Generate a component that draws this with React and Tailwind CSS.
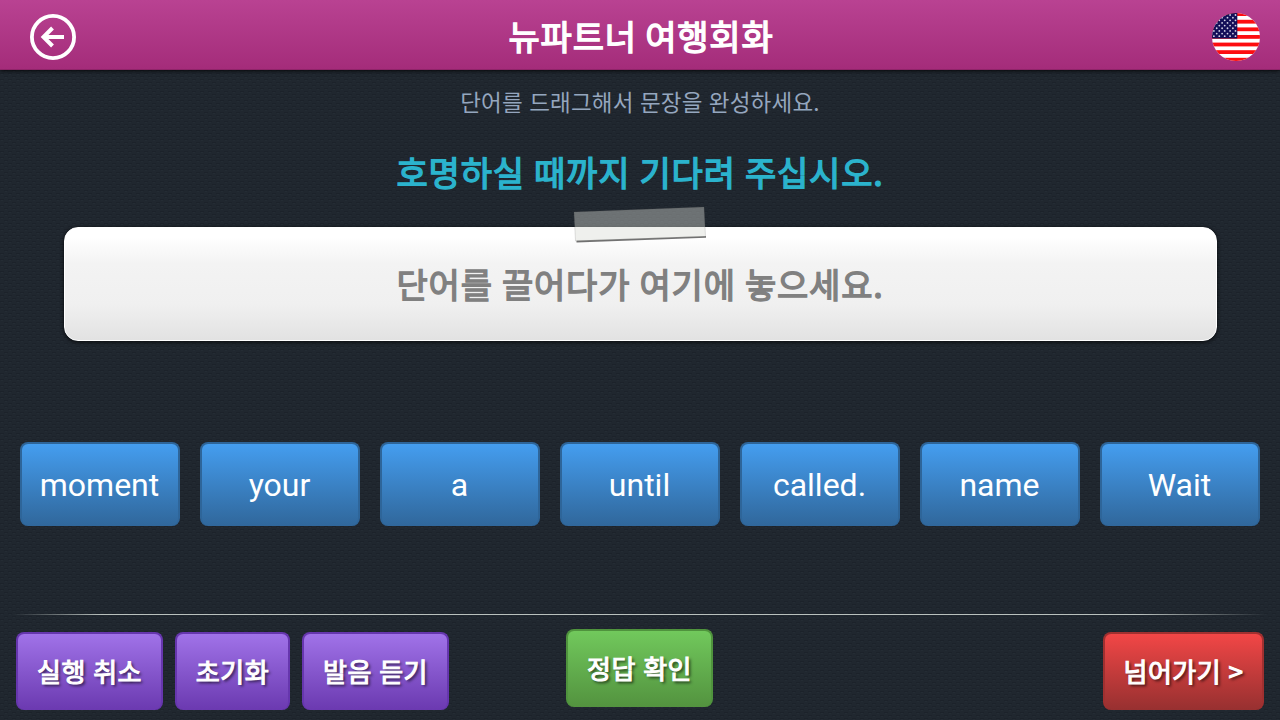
import React from 'react';

const words = ['moment', 'your', 'a', 'until', 'called.', 'name', 'Wait'];

const BackIcon = () => (
  <svg className="h-[46px] w-[46px]" viewBox="0 0 46 46" fill="none" stroke="white">
    <circle cx="23" cy="23" r="21.1" strokeWidth="3.8" />
    <path d="M34 23H14M22.500 14l-9 9 9 9" strokeWidth="4" />
  </svg>
);

const stripes = [0, 1, 2, 3, 4, 5, 6];
const starRows = [0, 1, 2, 3, 4, 5, 6, 7, 8];

const FlagIcon = () => (
  <svg className="h-12 w-12" viewBox="0 0 48 48">
    <defs>
      <clipPath id="round">
        <circle cx="24" cy="24" r="24" />
      </clipPath>
    </defs>
    <g clipPath="url(#round)">
      <rect width="48" height="48" fill="#fff" />
      {stripes.map((i) => (
        <rect key={i} y={i * 7.6 - 0.8} width="48" height="3.8" fill="#fd0d10" />
      ))}
      <rect width="25.3" height="25.5" fill="#140f58" />
      {starRows.map((row) =>
        [0, 1, 2, 3, 4].map((col) => (
          <circle
            key={`${row}-${col}`}
            cx={(row % 2 ? 4.7 : 1.9) + col * 5.4}
            cy={2 + row * 2.65}
            r={col === 4 && row % 2 ? 0 : 0.9}
            fill="#d5d3e6"
          />
        ))
      )}
    </g>
  </svg>
);

const Tape = () => (
  <svg className="absolute left-[508px] top-[-23px] h-[42px] w-[138px]" viewBox="0 0 138 42">
    <path d="M3.500 36.500L133 31.800" stroke="#000" strokeOpacity="0.55" strokeWidth="1.8" />
    <path d="M1 7L131 2L132.500 31.500L2.500 36Z" fill="#d8dcd4" fillOpacity="0.42" stroke="#555" strokeOpacity="0.25" strokeWidth="0.7" />
  </svg>
);

const ActionButton = ({ className, children }) => (
  <button
    className={`h-[78px] whitespace-nowrap rounded-lg border-2 border-b-0 pb-1 text-[26px] tracking-[0.5px] text-white [-webkit-text-stroke:1.1px_white] [text-shadow:2px_2px_3px_rgba(0,0,0,0.75)] [word-spacing:1px] ${className}`}
  >
    {children}
  </button>
);

const purple = 'border-[#6636ae] from-[#a274ea] to-[#6b39b0] bg-linear-to-b bg-origin-border';

const App = () => {
  return (
    <div className="relative flex h-[720px] w-[1280px] flex-col overflow-hidden bg-[#20272f] font-['Noto_Sans_CJK_KR',sans-serif]">
      <svg className="absolute inset-0 h-full w-full">
        <defs>
          <pattern id="weave" width="8" height="6" patternUnits="userSpaceOnUse">
            <path d="M0 1.500h4M4 4.500h4" stroke="#1c222a" strokeWidth="1" />
            <path d="M1 2.500h2M5 5.500h2" stroke="#242c34" strokeWidth="1" />
          </pattern>
        </defs>
        <rect width="1280" height="720" fill="url(#weave)" />
      </svg>

      <header className="relative flex h-[70px] shrink-0 items-center justify-between border-b border-[#8f2469] bg-linear-to-b from-[#b94292] to-[#a42c7a] pl-[30px] pr-5 pt-1 shadow-[0_1px_4px_rgba(0,0,0,0.8)]">
        <BackIcon />
        <h1 className="-ml-1.5 -mt-0.5 text-[34px] leading-none tracking-[0.8px] text-white [-webkit-text-stroke:1.4px_white]">뉴파트너 여행회화</h1>
        <FlagIcon />
      </header>

      <main className="relative flex flex-1 flex-col">
        <p className="mt-[15px] text-center text-[22.5px] leading-8 tracking-[0.2px] text-[#95a6be] [word-spacing:1px]">단어를 드래그해서 문장을 완성하세요.</p>
        <h2 className="mt-[31px] text-center text-[34px] leading-12 tracking-[0.8px] text-[#2bb3cd] [-webkit-text-stroke:1.4px_#2bb3cd] [word-spacing:0.8px]">호명하실 때까지 기다려 주십시오.</h2>

        <div className="relative mx-[63.5px] mt-[31px] flex h-[114px] items-center justify-center rounded-[14px] border border-white bg-[linear-gradient(to_bottom,#fff_8%,#f3f3f3_32%,#f0f0f0_68%,#e2e2e2_100%)] pb-0.5 shadow-[0_1px_4px_rgba(0,0,0,0.8)]">
          <Tape />
          <span className="text-[34px] tracking-[0.8px] text-[#808080] [-webkit-text-stroke:1.4px_#808080] [word-spacing:0.8px]">단어를 끌어다가 여기에 놓으세요.</span>
        </div>

        <div className="mx-5 mt-[101px] flex gap-5 font-['Roboto',sans-serif]">
          {words.map((word) => (
            <button
              key={word}
              className="h-21 flex-1 rounded-lg border-2 border-b-0 border-[#2e6599] bg-linear-to-b from-[#459ff2] to-[#30679b] bg-origin-border pr-px text-[32px] text-white"
            >
              {word}
            </button>
          ))}
        </div>
      </main>

      <footer className="relative h-[106px] shrink-0">
        <div className="h-px bg-[linear-gradient(to_right,transparent_1%,#b9c0bd_8%,#b9c0bd_89%,transparent_99%)]" />
        <div className="flex items-start px-4 pt-[17px]">
          <div className="flex gap-3">
            <ActionButton className={`w-[147px] ${purple}`}>실행 취소</ActionButton>
            <ActionButton className={`w-[115px] ${purple}`}>초기화</ActionButton>
            <ActionButton className={`w-[147px] ${purple}`}>발음 듣기</ActionButton>
          </div>
          <ActionButton className="-mt-[3px] ml-[117px] w-[147px] border-[#4f933d] bg-linear-to-b from-[#72ca5d] to-[#53933f] bg-origin-border">
            정답 확인
          </ActionButton>
          <ActionButton className="ml-auto w-[161px] border-[#a03030] bg-linear-to-b from-[#f54747] to-[#973030] bg-origin-border">
            넘어가기 &gt;
          </ActionButton>
        </div>
      </footer>
    </div>
  );
};

export default App;
